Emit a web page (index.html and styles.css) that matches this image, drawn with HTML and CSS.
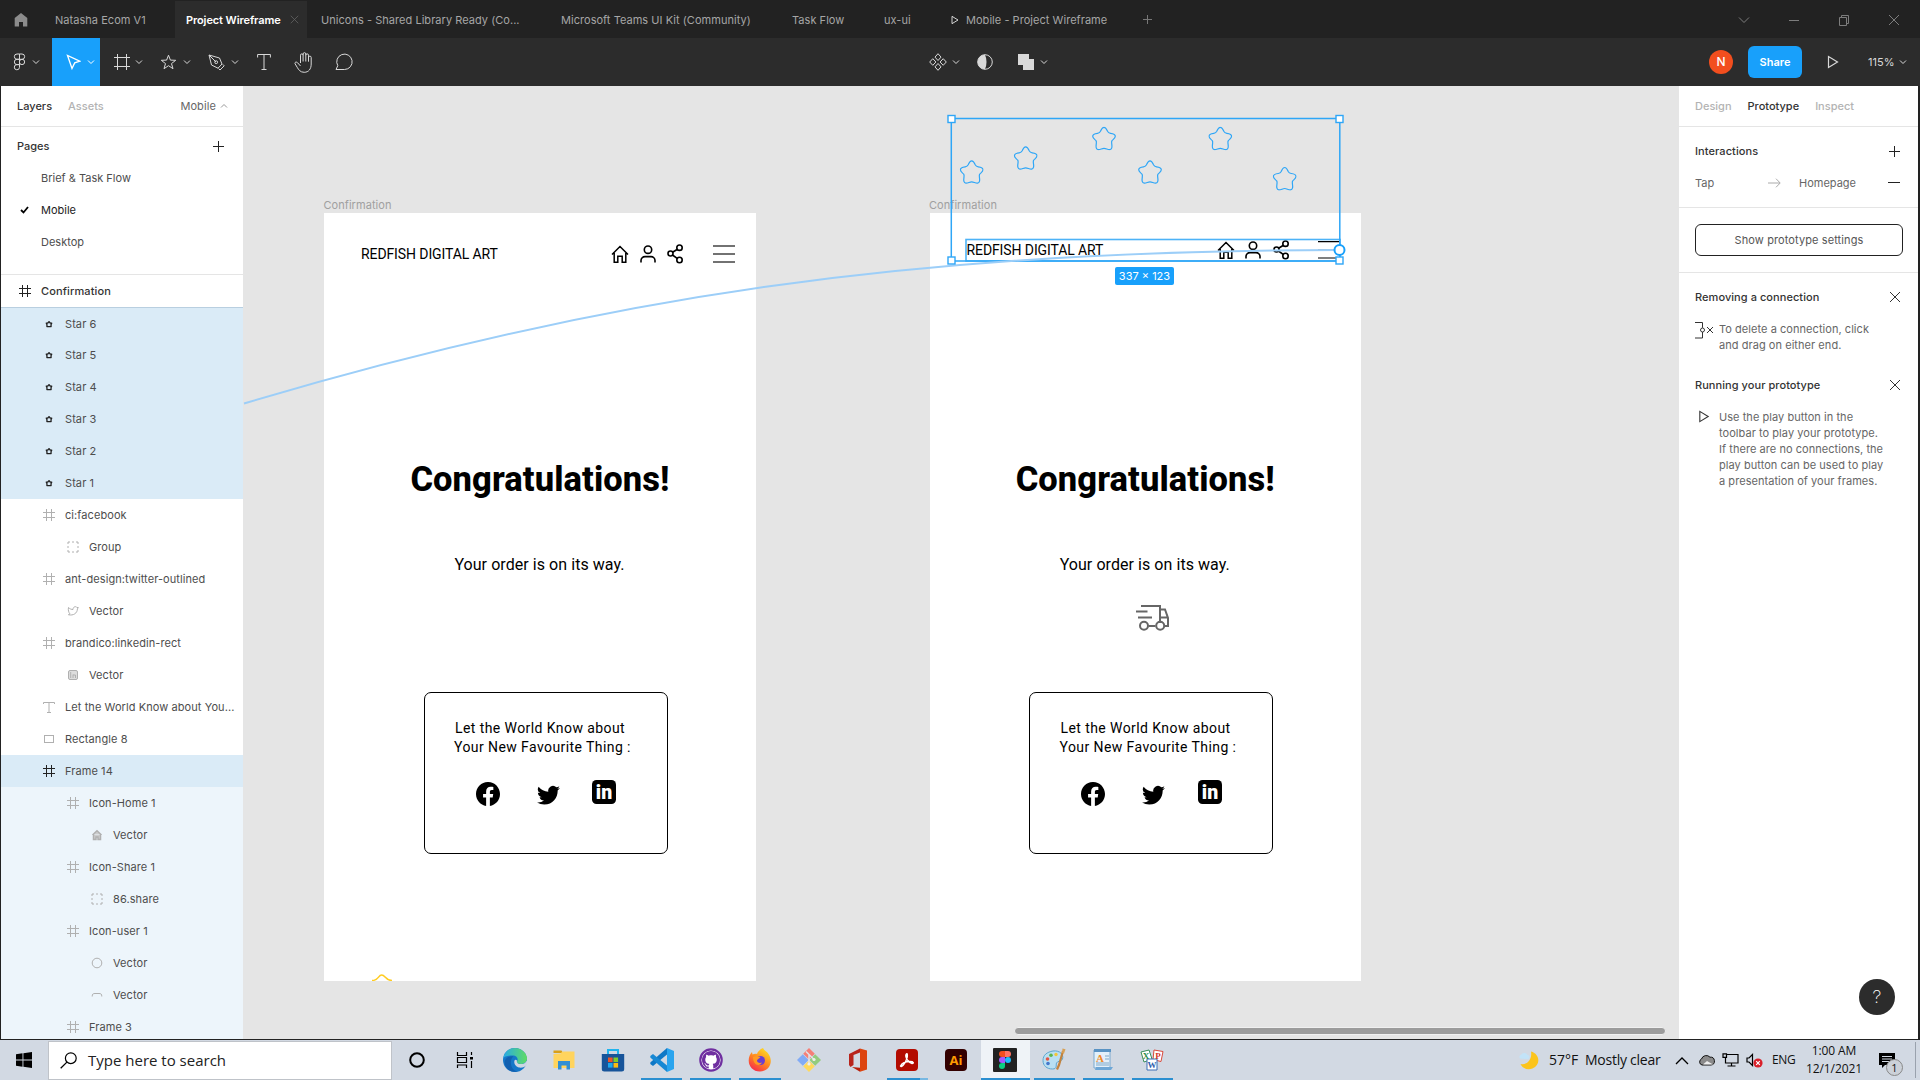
FILE: index.html
```html
<!DOCTYPE html>
<html lang="en">
<head>
<meta charset="utf-8">
<title>Project Wireframe</title>
<link rel="stylesheet" href="styles.css">
</head>
<body>
<svg class="defs" width="0" height="0">
  <symbol id="chev" viewBox="0 0 8 8"><path d="M1 2.500l3 3 3-3" fill="none" stroke="currentColor"/></symbol>
  <symbol id="frame" viewBox="0 0 12 12"><path d="M3.500 0v12M8.500 0v12M0 3.500h12M0 8.500h12" fill="none" stroke="currentColor"/></symbol>
  <symbol id="group" viewBox="0 0 12 12"><path d="M1 3V1h2M5 1h2M9 1h2v2M11 5v2M11 9v2H9M7 11H5M3 11H1V9M1 7V5" fill="none" stroke="currentColor"/></symbol>
  <symbol id="star" viewBox="0 0 24 24"><path d="M12 .8C14 .8 14.800 3.200 15.500 4.800C16.200 6.200 17 6.600 18.500 6.800C21 7.100 23.300 7.600 23.300 9.800C23.300 11.800 21 13 20 14.200C19.300 15.200 19.600 16.200 19.800 17.800C20.200 20.500 20 23 17.800 23.200C15.800 23.400 14 21.800 12 21.800C10 21.800 8.200 23.400 6.200 23.200C4 23 3.800 20.500 4.200 17.800C4.400 16.200 4.700 15.200 4 14.200C3 13 .7 11.800 .7 9.800C.7 7.600 3 7.100 5.500 6.800C7 6.600 7.800 6.200 8.500 4.800C9.200 3.200 10 .8 12 .8Z" fill="none" stroke="currentColor" stroke-width="1.200"/></symbol>
  <symbol id="ministar" viewBox="0 0 12 12"><path d="M6 3.600L7.200 5 8.700 5.200 8 6.700l.1 1.900H3.900L4 6.700 3.300 5.200 4.800 5z" fill="none" stroke="currentColor" stroke-width="1.300" stroke-linejoin="round"/></symbol>
  <symbol id="plus" viewBox="0 0 12 12"><path d="M6.500 .5v12M.5 6.500h12" fill="none" stroke="currentColor"/></symbol>
  <symbol id="cross" viewBox="0 0 12 12"><path d="M1 1l10 10M11 1L1 11" fill="none" stroke="currentColor"/></symbol>
  <symbol id="play" viewBox="0 0 12 14"><path d="M1.500 1.500v11L10.500 7z" fill="none" stroke="currentColor" stroke-width="1.200"/></symbol>
  <symbol id="home" viewBox="0 0 18 18"><path d="M1 9.500L9 1.500l8 8M3.200 8v9.300h3.600v-6h4.400v6h3.600V8" fill="none" stroke="currentColor" stroke-width="1.500"/></symbol>
  <symbol id="user" viewBox="0 0 16 18"><circle cx="8" cy="4.700" r="3.700" fill="none" stroke="currentColor" stroke-width="1.600"/><path d="M1 17.600v-2a4 4 0 0 1 4-4h6a4 4 0 0 1 4 4v2" fill="none" stroke="currentColor" stroke-width="1.600"/></symbol>
  <symbol id="share" viewBox="0 0 17 20"><g fill="none" stroke="currentColor" stroke-width="1.600"><circle cx="3.500" cy="9.500" r="2.500"/><circle cx="12.500" cy="3.700" r="2.700"/><circle cx="12.500" cy="16" r="2.700"/><path d="M5.600 8.200l4.800-3M5.500 11l5 3.600"/></g></symbol>
  <symbol id="fb" viewBox="0 0 16 16"><path d="M16 8.049c0-4.446-3.582-8.050-8-8.050C3.580 0-.002 3.603-.002 8.050c0 4.017 2.926 7.347 6.750 7.951v-5.625h-2.030V8.050H6.750V6.275c0-2.017 1.195-3.131 3.022-3.131.876 0 1.791.157 1.791.157v1.980h-1.009c-.993 0-1.303.621-1.303 1.258v1.510h2.218l-.354 2.326H9.250V16c3.824-.604 6.750-3.934 6.750-7.951z"/></symbol>
  <symbol id="tw" viewBox="0 0 16 16"><path d="M5.026 15c6.038 0 9.341-5.003 9.341-9.334 0-.14 0-.282-.006-.422A6.685 6.685 0 0 0 16 3.542a6.658 6.658 0 0 1-1.889.518 3.301 3.301 0 0 0 1.447-1.817 6.533 6.533 0 0 1-2.087.793A3.286 3.286 0 0 0 7.875 6.030a9.325 9.325 0 0 1-6.767-3.429 3.289 3.289 0 0 0 1.018 4.382A3.323 3.323 0 0 1 .64 6.575v.045a3.288 3.288 0 0 0 2.632 3.218 3.203 3.203 0 0 1-.865.115 3.230 3.230 0 0 1-.614-.057 3.283 3.283 0 0 0 3.067 2.277A6.588 6.588 0 0 1 .78 13.580a6.320 6.320 0 0 1-.78-.045A9.344 9.344 0 0 0 5.026 15z"/></symbol>
</svg>

<header class="tabs">
  <span class="tab-home"><svg width="14" height="16" viewBox="0 0 14 16"><path d="M7 1L.7 6v8.500H5V10h4v4.500h4.300V6z" fill="#8c8c8c"/></svg></span>
  <span class="tab">Natasha Ecom V1</span>
  <span class="tab active">Project Wireframe<svg class="tab-x" width="9" height="9"><use href="#cross"/></svg></span>
  <span class="tab">Unicons - Shared Library Ready (Co...</span>
  <span class="tab">Microsoft Teams UI Kit (Community)</span>
  <span class="tab">Task Flow</span>
  <span class="tab">ux-ui</span>
  <span class="tab"><svg class="tab-play" width="8" height="10"><use href="#play"/></svg>Mobile - Project Wireframe</span>
  <span class="tab-add"><svg width="10" height="10" viewBox="0 0 10 10"><path d="M4.500 0v9M0 4.500h9" stroke="#777"/></svg></span>
  <nav class="win">
    <svg width="12" height="12" viewBox="0 0 12 12"><path d="M1 3.500l5 5 5-5"/></svg>
    <svg width="12" height="12" viewBox="0 0 12 12"><path d="M1 6.500h10"/></svg>
    <svg width="12" height="12" viewBox="0 0 12 12"><path d="M1.500 3.500h7v8h-7zM3.500 3.500v-2h7v8h-2"/></svg>
    <svg width="12" height="12" viewBox="0 0 12 12"><path d="M1 1l10 10M11 1L1 11"/></svg>
  </nav>
</header>

<section class="toolbar">
  <div class="tool t-menu"><svg width="13" height="18" viewBox="0 0 13 18"><path d="M6.500 1H4a2.600 2.600 0 0 0 0 5.300h2.500zM6.500 1H9a2.600 2.600 0 0 1 0 5.300H6.500zM6.500 6.300H4a2.600 2.600 0 0 0 0 5.300h2.500zM9 6.300a2.600 2.600 0 1 1 0 5.300 2.600 2.600 0 0 1 0-5.300zM6.500 11.600H4a2.600 2.600 0 1 0 2.500 2.700z"/></svg><svg class="chev"><use href="#chev"/></svg></div>
  <div class="tool t-move"><svg width="15" height="16" viewBox="0 0 15 16"><path d="M1.500 1.500l4.500 13 2.700-5.600 5-1.700z" stroke-width="1.300"/></svg><svg class="chev"><use href="#chev"/></svg></div>
  <div class="tool t-frame"><svg width="16" height="16" viewBox="0 0 16 16"><path d="M3.500 0v16M12.500 0v16M0 3.500h16M0 12.500h16"/></svg><svg class="chev"><use href="#chev"/></svg></div>
  <div class="tool t-star"><svg width="17" height="16" viewBox="0 0 17 16"><path d="M8.500 1.200l1.900 4.900 5.300.2-4.200 3.300 1.500 5.100-4.500-3-4.500 3 1.500-5.100L1.300 6.300l5.300-.2z"/></svg><svg class="chev"><use href="#chev"/></svg></div>
  <div class="tool t-pen"><svg width="17" height="17" viewBox="0 0 17 17"><path d="M1 1l2.500 10 6.500 3.200L14 10 11.500 4zM1 1l7 7M10.500 14.500l1.500 1.500 4.200-4.200-1.500-1.500"/><circle cx="8.200" cy="8.200" r="1.400"/></svg><svg class="chev"><use href="#chev"/></svg></div>
  <div class="tool t-text"><svg width="14" height="16" viewBox="0 0 14 16"><path d="M.6 3.500v-3h12.800v3M7 .5v15M4.500 15.500h5"/></svg></div>
  <div class="tool t-hand"><svg width="19" height="21" viewBox="0 0 19 21"><path d="M6.500 11V3.200a1.300 1.300 0 0 1 2.600 0M9.100 9.500V2a1.300 1.300 0 0 1 2.700 0v7.500M11.800 3.200a1.300 1.300 0 0 1 2.700 0v6.500M14.500 5.500a1.300 1.300 0 0 1 2.700 0V12c0 5-2.500 8.300-7 8.300-4 0-5.500-2.500-7-5L1 11.700c-.5-1.500 1.400-2.200 2.500-1L6.500 14"/></svg></div>
  <div class="tool t-note"><svg width="18" height="18" viewBox="0 0 18 18"><path d="M1 16.500h8.500A7.700 7.700 0 1 0 2.800 12.700z"/></svg></div>
  <div class="mid">
    <svg width="18" height="18" viewBox="0 0 18 18"><path d="M9 .7l3 3.400-3 3.400-3-3.400zM9 10.500l3 3.400-3 3.400-3-3.400zM3.800 5.700L6.900 9l-3.100 3.300L.7 9zM14.200 5.700L17.300 9l-3.100 3.300L11.100 9z"/></svg><svg class="chev c1"><use href="#chev"/></svg>
    <svg class="mask" width="16" height="16" viewBox="0 0 16 16"><circle cx="8" cy="8" r="7.300"/><path d="M8 .7a7.300 7.300 0 0 0 0 14.600c2-4.500 2-10 0-14.600z" fill="#d9d9d9" stroke="none"/></svg>
    <svg class="bool" width="16" height="16" viewBox="0 0 16 16"><path d="M0 0h11v5h5v11H5v-5H0z" fill="#d9d9d9" stroke="none"/></svg><svg class="chev c2"><use href="#chev"/></svg>
  </div>
  <div class="right-tools"><span class="avatar">N</span><button class="share-btn">Share</button><svg class="present" width="12" height="14"><use href="#play"/></svg><span class="zoom">115%</span><svg class="chev"><use href="#chev"/></svg></div>
</section>

<main class="work">
  <aside class="left">
    <div class="panel-tabs"><b>Layers</b><b class="dim">Assets</b><span class="page-pick">Mobile<svg class="chev up"><use href="#chev"/></svg></span></div>
    <div class="pages">
      <div class="pages-head">Pages<svg width="13" height="13" viewBox="0 0 13 13"><path d="M6.500 1v11M1 6.500h11" stroke="#222"/></svg></div>
      <div class="page">Brief &amp; Task Flow</div>
      <div class="page current"><svg width="9" height="8" viewBox="0 0 9 8"><path d="M1 4l2.500 2.500L8 1" fill="none" stroke="#000" stroke-width="1.800"/></svg>Mobile</div>
      <div class="page">Desktop</div>
    </div>
    <div class="layers">
      <div class="row top"><svg class="ic"><use href="#frame"/></svg>Confirmation</div>
      <div class="row l1 sel"><svg class="ic"><use href="#ministar"/></svg>Star 6</div>
      <div class="row l1 sel"><svg class="ic"><use href="#ministar"/></svg>Star 5</div>
      <div class="row l1 sel"><svg class="ic"><use href="#ministar"/></svg>Star 4</div>
      <div class="row l1 sel"><svg class="ic"><use href="#ministar"/></svg>Star 3</div>
      <div class="row l1 sel"><svg class="ic"><use href="#ministar"/></svg>Star 2</div>
      <div class="row l1 sel"><svg class="ic"><use href="#ministar"/></svg>Star 1</div>
      <div class="row l1"><svg class="ic"><use href="#frame"/></svg>ci:facebook</div>
      <div class="row l2"><svg class="ic"><use href="#group"/></svg>Group</div>
      <div class="row l1"><svg class="ic"><use href="#frame"/></svg>ant-design:twitter-outlined</div>
      <div class="row l2"><svg class="ic" viewBox="0 0 12 12"><path d="M1.500 2.500c1.500 1.600 3 2 4.500 2C6 1.500 9 1 10 2.500h1.300L10.400 4c0 4-4 7-9 5.700L3 8.800C1.600 7.500 1 5 1.500 2.500z" fill="none" stroke="currentColor"/></svg>Vector</div>
      <div class="row l1"><svg class="ic"><use href="#frame"/></svg>brandico:linkedin-rect</div>
      <div class="row l2"><svg class="ic" viewBox="0 0 12 12"><rect x="1.500" y="1.500" width="9" height="9" rx="1.500" fill="#ddd" stroke="currentColor"/><path d="M3.700 3v6M6 9V5.500M6 6h2.500v3" fill="none" stroke="currentColor"/></svg>Vector</div>
      <div class="row l1"><svg class="ic" viewBox="0 0 12 12"><path d="M.5 3V1.500h11V3M6 1.500v10M4 11.500h4" fill="none" stroke="currentColor"/></svg>Let the World Know about You...</div>
      <div class="row l1"><svg class="ic" viewBox="0 0 12 12"><rect x="1.500" y="2.500" width="9" height="7" fill="none" stroke="currentColor"/></svg>Rectangle 8</div>
      <div class="row l1 sel"><svg class="ic"><use href="#frame"/></svg>Frame 14</div>
      <div class="row l2 child"><svg class="ic"><use href="#frame"/></svg>Icon-Home 1</div>
      <div class="row l3 child"><svg class="ic" viewBox="0 0 12 12"><path d="M1.500 6L6 1.800 10.500 6M2.500 5.500v5h2.500V8h2v2.500h2.500v-5" fill="#ccc" stroke="currentColor" stroke-width="1.500"/></svg>Vector</div>
      <div class="row l2 child"><svg class="ic"><use href="#frame"/></svg>Icon-Share 1</div>
      <div class="row l3 child"><svg class="ic"><use href="#group"/></svg>86.share</div>
      <div class="row l2 child"><svg class="ic"><use href="#frame"/></svg>Icon-user 1</div>
      <div class="row l3 child"><svg class="ic" viewBox="0 0 12 12"><circle cx="6" cy="6" r="4.800" fill="none" stroke="currentColor"/></svg>Vector</div>
      <div class="row l3 child"><svg class="ic" viewBox="0 0 12 12"><path d="M1.200 7.500C1.200 5 2 4.500 4 4.500h4c2 0 2.800.5 2.800 3" fill="none" stroke="currentColor"/></svg>Vector</div>
      <div class="row l2 child"><svg class="ic"><use href="#frame"/></svg>Frame 3</div>
    </div>
  </aside>

  <section class="canvas">
    <div class="artboard a1">
      <span class="label">Confirmation</span>
      <div class="head"><span class="brand">REDFISH DIGITAL ART</span><svg class="h-home" width="18" height="18"><use href="#home"/></svg><svg class="h-user" width="16" height="18"><use href="#user"/></svg><svg class="h-share" width="17" height="20"><use href="#share"/></svg><svg class="h-menu" width="22" height="20" viewBox="0 0 22 20"><path d="M0 2h22M0 10h22M0 18h22" stroke="#444" stroke-width="1.300"/></svg></div>
      <h1>Congratulations!</h1>
      <p class="msg">Your order is on its way.</p>
      <div class="truck"></div>
      <div class="card"><p class="first">Let the World Know about</p><p>Your New Favourite Thing :</p><div class="social"><svg class="s-fb"><use href="#fb"/></svg><svg class="s-tw"><use href="#tw"/></svg><svg class="s-li" viewBox="0 0 24 24"><rect width="24" height="24" rx="4.500"/><text class="li-text" x="12" y="19" text-anchor="middle">in</text></svg></div></div>
      <svg class="peek" width="20" height="7" viewBox="0 0 20 7"><path d="M0 6.500C7 6.500 6 1 9.700 1S13 6.500 20 6.500" fill="none" stroke="#fc2" stroke-width="1.500"/></svg>
    </div>
    <div class="artboard a2">
      <span class="label">Confirmation</span>
      <div class="head"><span class="brand">REDFISH DIGITAL ART</span><svg class="h-home" width="18" height="18"><use href="#home"/></svg><svg class="h-user" width="16" height="18"><use href="#user"/></svg><svg class="h-share" width="17" height="20"><use href="#share"/></svg><svg class="h-menu" width="22" height="20" viewBox="0 0 22 20"><path d="M0 1.700h22M0 18h22" stroke="#000" stroke-width="1.200"/><path d="M0 9.500h22" stroke="#999"/></svg></div>
      <h1>Congratulations!</h1>
      <p class="msg">Your order is on its way.</p>
      <div class="truck"><svg width="33" height="27" viewBox="0 0 33 27"><g fill="none" stroke="#666" stroke-width="2"><path d="M5 2h19v17M0 7.500h11.500M2 13.500h14M12.500 22h7M24 5.500h5L32 14v8h-3.500M24 13.500h8"/><circle cx="8" cy="21.800" r="4"/><circle cx="24.200" cy="21.800" r="4"/></g></svg></div>
      <div class="card"><p class="first">Let the World Know about</p><p>Your New Favourite Thing :</p><div class="social"><svg class="s-fb"><use href="#fb"/></svg><svg class="s-tw"><use href="#tw"/></svg><svg class="s-li" viewBox="0 0 24 24"><rect width="24" height="24" rx="4.500"/><text class="li-text" x="12" y="19" text-anchor="middle">in</text></svg></div></div>
    </div>
    <svg class="overlay" width="1436" height="953" viewBox="243 86 1436 953">
      <g class="stars">
        <use href="#star" x="959.700" y="160" width="24" height="24"/><use href="#star" x="1013.700" y="146" width="24" height="24"/><use href="#star" x="1092" y="126.500" width="24" height="24"/><use href="#star" x="1138" y="160" width="24" height="24"/><use href="#star" x="1208.300" y="126.500" width="24" height="24"/><use href="#star" x="1272.700" y="166.700" width="24" height="24"/>
      </g>
      <rect x="966" y="239.500" width="374" height="21.500" fill="none" stroke="#4db3f7" stroke-width="1.600"/>
      <rect x="951.300" y="118.500" width="388.500" height="142.500" fill="none" stroke="#2ea6f7" stroke-width="1.500"/>
      <path d="M244 403.500C604 295.500 920 250 1340 250" fill="none" stroke="#9ccef8" stroke-width="2"/>
      <g fill="#fff" stroke="#2ea6f7" stroke-width="1.400"><rect x="948" y="115.500" width="7" height="7"/><rect x="1336" y="115.500" width="7" height="7"/><rect x="948" y="257" width="7" height="7"/><rect x="1336" y="257" width="7" height="7"/></g>
      <circle cx="1339.500" cy="250" r="5" fill="#fff" stroke="#18a0fb" stroke-width="2"/>
    </svg>
    <span class="dims">337 × 123</span>
    <i class="scroll"></i>
  </section>

  <aside class="right">
    <div class="panel-tabs"><b class="dim">Design</b><b>Prototype</b><b class="dim">Inspect</b></div>
    <div class="inter">
      <div class="inter-head">Interactions<svg width="13" height="13" viewBox="0 0 13 13"><path d="M6.500 1v11M1 6.500h11" stroke="#222"/></svg></div>
      <div class="inter-row"><span class="trig">Tap</span><svg class="arrow" width="13" height="10" viewBox="0 0 13 10"><path d="M0 5h12M8 .7L12.200 5 8 9.300" fill="none" stroke="#aaa"/></svg><span>Homepage</span><svg class="minus" width="12" height="12" viewBox="0 0 12 12"><path d="M0 5.500h12" stroke="#222"/></svg></div>
    </div>
    <div class="settings"><button>Show prototype settings</button></div>
    <div class="tips">
      <h3>Removing a connection<svg width="12" height="12"><use href="#cross"/></svg></h3>
      <div class="tip"><svg width="19" height="18" viewBox="0 0 19 18"><path d="M0 1.500h7.500v5.300M7.500 11v6H0M12 6l6 6M18 6l-6 6" fill="none" stroke="#333"/><circle cx="7.500" cy="9" r="2" fill="none" stroke="#333"/></svg><p>To delete a connection, click<br>and drag on either end.</p></div>
      <h3 class="second">Running your prototype<svg width="12" height="12"><use href="#cross"/></svg></h3>
      <div class="tip"><svg class="tip-play" width="12" height="13"><use href="#play"/></svg><p>Use the play button in the<br>toolbar to play your prototype.<br>If there are no connections, the<br>play button can be used to play<br>a presentation of your frames.</p></div>
    </div>
    <span class="help">?</span>
  </aside>
</main>

<footer class="taskbar">
  <span class="start"><svg width="16" height="16" viewBox="0 0 16 16"><path d="M0 2.200L6.500 1.300v6.200H0zM7.400 1.200L16 0v7.500H7.400zM0 8.400h6.500v6.300L0 13.800zM7.400 8.400H16V16l-8.600-1.200z"/></svg></span>
  <div class="search"><svg width="17" height="17" viewBox="0 0 17 17"><circle cx="10.800" cy="6.200" r="5.400" fill="none" stroke="#000" stroke-width="1.200"/><path d="M6.900 10.100L.7 16.300" stroke="#000" stroke-width="1.300"/></svg>Type here to search</div>
  <div class="apps">
    <span class="app"><svg viewBox="0 0 24 24"><circle cx="12" cy="12" r="6.800" fill="none" stroke="#000" stroke-width="2"/></svg></span>
    <span class="app"><svg viewBox="0 0 24 24"><path d="M3.500 4v3.500h9V4M3.500 20v-3h9v3M3.500 9.500h9v5h-9zM17.500 4v3M17.500 13v7" fill="none" stroke="#000" stroke-width="1.200"/><rect x="16" y="9" width="3" height="2.500"/></svg></span>
    <span class="app"><svg viewBox="0 0 24 24"><defs><linearGradient id="e1" x1="0" x2="1"><stop stop-color="#27a9e8"/><stop offset="1" stop-color="#5fdc63"/></linearGradient></defs><circle cx="12" cy="12" r="12" fill="#1577c9"/><path d="M0 11C1 4 6 0 12 0s12 5 12 10.500c0 4-3.500 5.500-6.500 5.500-2.500 0-4-1-3.500-2.500 1.500-2 .5-6-4.500-6C5 7.500 1 8.500 0 11z" fill="url(#e1)"/><path d="M24 17c-2 2-5 3-8 2.500-3-.5-5.500-3.500-4.500-7 .5-1 1.500-1 2.500 0-.5 2 .5 3.500 3.500 3.500 2.500 0 5-.5 6.400-3.500L24.500 14z" fill="#cdd6e2"/><path d="M8 13c-1 6 3 10.500 7 10.500C9 25 2 22 1.500 14 2.500 8.500 8 8 10.500 8.500 9 9.500 8.200 11 8 13z" fill="#1160b0"/></svg></span>
    <span class="app"><svg viewBox="0 0 24 24"><path d="M1.500 2.500h8l1.500 2.500H1.500z" fill="#d9a018"/><path d="M1.500 6l7-.5 2-2H22.500V20h-21z" fill="#ffd45e"/><path d="M6 21.500V13h12v8.500h-3.500V17.500h-5v4z" fill="#2f8fd4"/></svg></span>
    <span class="app"><svg viewBox="0 0 24 24"><path d="M7 7V2h10v5" fill="none" stroke="#20b4ee" stroke-width="2"/><path d="M.8 6h22.400v15a2.500 2.500 0 0 1-2.500 2.500H3.300A2.500 2.500 0 0 1 .8 21z" fill="#17549a"/><path d="M7 9.500h4.600v4.600H7z" fill="#f05327"/><path d="M12.500 9.500h4.600v4.600h-4.600z" fill="#80cc28"/><path d="M7 15h4.600v4.600H7z" fill="#1ba8ef"/><path d="M12.500 15h4.600v4.600h-4.600z" fill="#fcbb10"/></svg></span>
    <span class="app on"><svg viewBox="0 0 24 24"><path d="M17 0l7 3v18l-7 3z" fill="#2aa4ee"/><path d="M17 0v6.500L3 18 .3 16v-1.500z" fill="#0f78c6"/><path d="M17 24v-6.500L3 6 .3 8v1.500z" fill="#1788d4"/></svg></span>
    <span class="app on"><svg viewBox="0 0 24 24"><circle cx="12" cy="12" r="11.300" fill="#fff"/><circle cx="12" cy="12" r="10.700" fill="none" stroke="#6f2fa0" stroke-width="2.200"/><g transform="translate(3 3) scale(1.125)"><path d="M8 0C3.580 0 0 3.580 0 8c0 3.540 2.290 6.530 5.470 7.590.4.070.55-.17.55-.38 0-.19-.01-.82-.01-1.490-2.010.37-2.530-.49-2.690-.94-.09-.23-.48-.94-.82-1.130-.28-.15-.68-.52-.01-.53.63-.01 1.080.58 1.230.82.72 1.210 1.870.87 2.330.66.07-.52.28-.87.51-1.070-1.780-.2-3.640-.89-3.640-3.950 0-.87.31-1.590.82-2.150-.08-.2-.36-1.020.08-2.120 0 0 .67-.21 2.200.82.64-.18 1.320-.27 2-.27.68 0 1.360.09 2 .27 1.530-1.040 2.200-.82 2.200-.82.44 1.100.16 1.920.08 2.120.51.56.82 1.270.82 2.150 0 3.070-1.870 3.750-3.650 3.950.29.25.54.73.54 1.480 0 1.070-.01 1.930-.01 2.200 0 .21.15.46.55.38A8.012 8.012 0 0 0 16 8c0-4.420-3.580-8-8-8z" fill="#6f2fa0"/></g></svg></span>
    <span class="app on"><svg viewBox="0 0 24 24"><defs><linearGradient id="ff" x1=".8" y1="0" x2=".2" y2="1"><stop stop-color="#ffe226"/><stop offset=".5" stop-color="#ff8a1f"/><stop offset="1" stop-color="#f5244f"/></linearGradient></defs><path d="M15 0c1 2.500 4 3.500 5.500 6C26 14 21 23.500 12 23.500 5 23.500.7 18.500.7 12.500.7 9 2 6 4 4l.5 2.500C6 5.500 8 5.500 9 6c.5-2 3-5 6-6z" fill="url(#ff)"/><circle cx="12.500" cy="12.500" r="4.500" fill="#6a3fd0"/><path d="M5 9c3-1.500 5 0 7.500 0-1 2-3 1.500-3.500 3.500 0 2 2.500 3 5 2-2 4.500-9 3-9-5.500z" fill="#ff9a22"/></svg></span>
    <span class="app"><svg viewBox="0 0 24 24"><path d="M12 0l5.800 5.800L12 11.600 6.200 5.800z" fill="#f57f77"/><path d="M18.200 6.200L24 12l-5.800 5.800L12.400 12z" fill="#93cc7d"/><path d="M5.800 6.200L11.600 12l-5.800 5.800L0 12z" fill="#82abf5"/><path d="M12 12.400l5.800 5.800L12 24l-5.800-5.800z" fill="#ffd95c"/><path d="M9 3.500l8 8M12 7v9" stroke="#dfe4ea" stroke-width="1.500"/><circle cx="12" cy="16" r="1.600" fill="#eee"/><circle cx="17" cy="11.500" r="1.600" fill="#eee"/></svg></span>
    <span class="app"><svg viewBox="0 0 24 24"><path d="M3 6l11-5.500v4L7.500 7v10l-3 2L3 17z" fill="#b8241c"/><path d="M14 .5l7 2v19l-7 2.200z" fill="#dd4510"/><path d="M6 19l8 .7v4z" fill="#b8200c"/></svg></span>
    <span class="app on half"><svg viewBox="0 0 24 24"><rect x="1" y="1" width="22" height="22" rx="4" fill="#b30b00"/><path d="M5.500 18c1.500-3 6-4.500 9.500-4.500 4 0 4 2.200 2 2C13.500 15 10 9 11 6.500c1.500-2.500 2 1.500.5 5C10 15.500 6.500 20 5.500 18z" fill="none" stroke="#fff" stroke-width="1.400"/></svg></span>
    <span class="app"><svg viewBox="0 0 24 24"><rect x="1" y="1" width="22" height="22" rx="4" fill="#330000"/><text class="ai-text" x="12" y="16.700" text-anchor="middle">Ai</text></svg></span>
    <span class="app on focus"><svg viewBox="0 0 24 24"><rect width="24" height="24" rx="1" fill="#222"/><path d="M9 3h3v6H9a3 3 0 0 1 0-6z" fill="#f24e1e"/><path d="M12 3h3a3 3 0 0 1 0 6h-3z" fill="#ff7262"/><path d="M9 9h3v6H9a3 3 0 0 1 0-6z" fill="#a259ff"/><circle cx="15" cy="12" r="3" fill="#1abcfe"/><path d="M9 15h3v3a3 3 0 1 1-3-3z" fill="#0acf83"/></svg></span>
    <span class="app on"><svg viewBox="0 0 24 24"><path d="M11 3c7-1 11 4 9.500 8-1 3-5 1.500-6 4-.8 2.500 1 6-4 6C5 21 1 18 1 12.500 1 7 5 4 11 3z" fill="#b9dff2" stroke="#5da6cf"/><circle cx="5.500" cy="11" r="1.800" fill="#e25545"/><circle cx="9" cy="7.200" r="1.800" fill="#5db54d"/><circle cx="14" cy="6.500" r="1.700" fill="#f2c53a"/><circle cx="6" cy="15.500" r="1.800" fill="#4477cc"/><path d="M21 3l-4 14-2 4.500" stroke="#c3833e" stroke-width="2.200" fill="none"/><path d="M20 5l.5-4.500 3 .8L22 5.500z" fill="#d7a055"/></svg></span>
    <span class="app on"><svg viewBox="0 0 24 24"><path d="M3 2h16v18H3z" fill="#e3f0fa" stroke="#7aa9cf"/><path d="M3 1h17v3H3z" fill="#5993c4"/><path d="M5 19h17l-2 3H4z" fill="#6ea7d6"/><path d="M14 8h4M14 11h4M5 15h13M5 17h13" stroke="#7fa8c8"/><text class="doc-a" x="9" y="13.500" text-anchor="middle">A</text></svg></span>
    <span class="app on"><svg viewBox="0 0 24 24"><path d="M1 4l8-2 3 9-8 3z" fill="#fff" stroke="#3a8f5a"/><path d="M14 2l9 1.500-2 10-8-2z" fill="#fff" stroke="#d9493b"/><path d="M7 11h10v11H7z" fill="#fff" stroke="#3b6fb6"/><g class="cards-text" text-anchor="middle"><text x="6" y="11" fill="#2a8a4a">X</text><text x="18" y="10.500" fill="#d33a2c">P</text><text x="12" y="20" fill="#2f62ae">W</text></g></svg></span>
  </div>
  <div class="tray">
    <svg class="moon" width="20" height="19" viewBox="0 0 20 19"><path d="M12 .5c9 2.500 10 13 1.500 17C8 19.500 3 17 1.500 13c6 1.500 12-4 10.500-12.500z" fill="#fcc41c"/><path d="M1 7.500a2.500 2.500 0 0 1 1.500-4 3.500 3.500 0 0 1 6 .5 2 2 0 0 1 0 4z" fill="#c2e3f8"/></svg>
    <span class="temp">57°F</span><span class="sky">Mostly clear</span>
    <svg class="t-up" width="14" height="9" viewBox="0 0 14 9"><path d="M1 8l6-6 6 6" fill="none" stroke="#000" stroke-width="1.300"/></svg>
    <svg class="t-cloud" width="17" height="12" viewBox="0 0 17 12"><path d="M4 11a3.200 3.200 0 0 1-.5-6A5 5 0 0 1 12 3.200 3.900 3.900 0 0 1 13 11z" fill="#8b8b8b" stroke="#111"/><path d="M5 10.500l4-3.500 6 3.500z" fill="#eee"/></svg>
    <svg class="t-net" width="17" height="14" viewBox="0 0 17 14"><path d="M5 1.500h11v8.500H3.500V5M9.500 10v3M5.500 13h8M1 .8h3.500v3.500H1z" fill="none" stroke="#000" stroke-width="1.200"/></svg>
    <svg class="t-vol" width="17" height="15" viewBox="0 0 17 15"><path d="M1 5h2l3.500-3.500v11L3 9H1z" fill="none" stroke="#000" stroke-width="1.200"/><circle cx="12" cy="10" r="4.600" fill="#d9202a"/><path d="M10.200 8.200l3.600 3.600M13.800 8.200l-3.600 3.600" stroke="#fff" stroke-width="1.200"/></svg>
    <span class="lang">ENG</span>
    <span class="clock">1:00 AM<br>12/1/2021</span>
    <span class="notif"><svg width="16" height="15" viewBox="0 0 16 15"><path d="M0 0h16v12H6l-3 3v-3H0z"/><path d="M3 3.500h10M3 6h10M3 8.500h7" stroke="#d2d9e3"/></svg><i>1</i></span>
  </div>
</footer>
</body>
</html>
```

FILE: styles.css
```css
* { box-sizing: border-box; }
body { margin: 0; width: 1920px; height: 1080px; overflow: hidden; display: flex; flex-direction: column; font: 11px/16px Inter, sans-serif; color: #333; background: #222; }
svg { flex: none; display: block; }
p, h1, h3 { margin: 0; }
.defs { position: absolute; }
.chev { width: 8px; height: 8px; }

/* file tabs */
.tabs { height: 38px; display: grid; grid-template-columns: 41px 134px 132px 240px 231px 92px 67px 192px 38px 1fr; background: #222; color: #a6a6a6; padding-top: 1px; letter-spacing: .04px; }
.tabs > * { display: flex; align-items: center; white-space: nowrap; }
.tab { padding-left: 14px; }
.tab.active { background: #2c2c2c; color: #fff; font-weight: 600; padding-left: 11px; letter-spacing: -.1px; }
.tab-home { padding-left: 14px; }
.tab-x { margin-left: 9px; color: #666; }
.tab-play { margin-right: 7px; color: #fff; }
.tab-add { padding-left: 14px; color: #777; }
.win { justify-content: flex-end; gap: 38px; padding-right: 20px; }
.win path { fill: none; stroke: #7d7d7d; }

/* toolbar */
.toolbar { height: 48px; background: #2c2c2c; display: flex; align-items: center; color: #d9d9d9; }
.toolbar path, .toolbar circle { stroke: #d9d9d9; fill: none; }
.toolbar path[fill="#d9d9d9"] { fill: #d9d9d9; stroke: none; }
.tool { height: 48px; display: flex; align-items: center; width: 48px; }
.tool .chev { margin-left: 7px; }
.t-menu { width: 52px; padding-left: 13px; }
.t-menu .chev { margin-left: 6px; }
.t-move { background: #18a0fb; padding-left: 14px; color: #fff; }
.t-move path { stroke: #fff; }
.t-move .chev { margin-left: 6px; }
.t-frame { padding-left: 14px; }
.t-frame .chev { margin-left: 5px; }
.t-star { padding-left: 12px; }
.t-star .chev { margin-left: 6px; }
.t-pen { padding-left: 12px; }
.t-pen .chev { margin-left: 6px; }
.t-text { width: 49px; padding-left: 13px; }
.t-hand { width: 40px; padding-left: 1px; }
.t-note { width: 40px; padding-left: 2px; }
.mid { margin-left: 556px; display: flex; align-items: center; width: 160px; }
.mid .c1 { margin-left: 5px; }
.mask { margin-left: 17px; }
.bool { margin-left: 25px; }
.mid .c2 { margin-left: 6px; }
.right-tools { margin-left: auto; display: flex; align-items: center; padding-right: 13px; }
.avatar { width: 24px; height: 24px; border-radius: 50%; background: #f24e1e; color: #fff; font-weight: 500; font-size: 12px; line-height: 24px; text-align: center; margin-right: 15px; }
.share-btn { width: 54px; height: 32px; border: 0; border-radius: 6px; background: #18a0fb; color: #fff; font: 600 11px Inter, sans-serif; padding: 0; margin-right: 25px; }
.present { margin-right: 29px; }
.zoom { width: 26px; margin-right: 5px; white-space: nowrap; }

/* workspace */
.work { height: 953px; display: grid; grid-template-columns: 242px 1436px 240px; padding-left: 1px; }
.left, .right { background: #fff; overflow: hidden; }
.panel-tabs { height: 41px; border-bottom: 1px solid #e5e5e5; display: flex; align-items: center; padding-left: 16px; gap: 16px; }
.panel-tabs b { font-weight: 550; }
.panel-tabs .dim { color: #b3b3b3; font-weight: 500; }
.page-pick { margin-left: auto; display: flex; align-items: center; gap: 4px; color: #666; padding-right: 15px; letter-spacing: .1px; }
.up { transform: rotate(180deg); color: #999; }
.pages { height: 148px; padding-top: 3px; border-bottom: 1px solid #e5e5e5; }
.pages-head { height: 32px; display: flex; align-items: center; justify-content: space-between; padding: 0 18px 0 16px; font-weight: 550; }
.page { height: 32px; line-height: 32px; padding-left: 40px; position: relative; color: #4d4d4d; }
.page.current { color: #222; }
.page svg { position: absolute; left: 19px; top: 12px; }
.row { height: 32px; display: flex; align-items: center; gap: 10px; color: #4d4d4d; white-space: nowrap; letter-spacing: .08px; }
.ic { width: 12px; height: 12px; color: #b0b0b0; }
.row.top { padding-left: 18px; font-weight: 550; color: #333; letter-spacing: .12px; border-bottom: 1px solid #b9cfe0; height: 33px; padding-bottom: 0; }
.row.top + .row { height: 31px; }
.row.top .ic, .sel .ic { color: #222; }
.l1 { padding-left: 42px; }
.l2 { padding-left: 66px; }
.l3 { padding-left: 90px; }
.sel { background: #daebf7; }
.child { background: #edf5fb; }

/* canvas */
.canvas { background: #e5e5e5; position: relative; overflow: hidden; }
.artboard { position: absolute; top: 127px; width: 432px; height: 768px; background: #fff; font-family: Roboto, sans-serif; color: #000; display: flex; flex-direction: column; }
.a1 { left: 81px; }
.a2 { left: 686.500px; width: 431.500px; }
.label { position: absolute; left: -.5px; top: -16px; font: 11px/16px Inter, sans-serif; color: #a0a0a0; letter-spacing: .05px; }
.head { margin: 29.500px 0 .5px 37px; height: 23px; display: flex; align-items: center; }
.a2 .head { margin-top: 25px; margin-bottom: 5px; }
.brand { width: 250px; font-size: 14px; letter-spacing: -.1px; }
.h-user { margin-left: 10.500px; }
.h-share { margin-left: 11.500px; }
.h-menu { margin-left: 28.500px; }
.artboard h1 { margin-top: 193px; font-size: 34.500px; line-height: 40px; font-weight: 800; letter-spacing: .08px; text-align: center; }
.msg { margin-top: 56px; font-size: 16px; line-height: 20px; letter-spacing: .06px; text-align: center; padding-right: 1px; }
.truck { height: 117px; padding: 28.500px 0 0 206.500px; }
.card { margin-left: 99.500px; width: 244px; height: 162px; border: 1.200px solid #000; border-radius: 7px; padding: 25.500px 0 0 29.500px; font-size: 14px; line-height: 19.500px; letter-spacing: .42px; }
.first { padding-left: 1px; }
.social { display: flex; padding: 22.500px 0 0 21.500px; }
.s-fb { width: 24px; height: 24px; margin-top: 2px; }
.s-tw { width: 23px; height: 23px; margin: 3px 0 0 37px; }
.s-li { width: 24px; height: 24px; margin-left: 32.500px; }
.li-text { font: 900 19.500px Roboto, sans-serif; letter-spacing: 0; fill: #fff; }
.peek { position: absolute; left: 48px; bottom: 0; }
.overlay { position: absolute; left: 0; top: 0; }
.stars { color: #2ea6f7; }
.dims { position: absolute; left: 872px; top: 181px; width: 59px; height: 18px; border-radius: 2px; background: #18a0fb; color: #fff; line-height: 18px; text-align: center; white-space: nowrap; }
.scroll { position: absolute; left: 771px; top: 941px; width: 652px; height: 8px; border-radius: 4px; background: #9c9c9c; border: 1px solid #f0f0f0; }

/* prototype panel */
.right { position: relative; border-right: 1px solid #222; }
.inter { height: 81px; padding: 8px 17px 0 16px; border-bottom: 1px solid #e5e5e5; }
.inter-head { height: 32px; display: flex; align-items: center; justify-content: space-between; font-weight: 550; letter-spacing: .08px; }
.inter-row { height: 32px; display: flex; align-items: center; color: #666; }
.trig { width: 73px; }
.arrow { margin-right: 18px; }
.minus { margin-left: auto; margin-right: 1px; }
.settings { height: 65px; padding: 16px 15px 0 16px; border-bottom: 1px solid #e5e5e5; }
.settings button { width: 208px; height: 32px; background: #fff; border: 1px solid #222; border-radius: 6px; color: #555; font: 11px Inter, sans-serif; letter-spacing: .1px; padding: 0; }
.tips { padding: 8px 17px 0 16px; }
.tips h3 { height: 32px; display: flex; align-items: center; justify-content: space-between; font-size: 11px; font-weight: 550; letter-spacing: .06px; }
.tips .second { margin-top: 16px; }
.tip { display: flex; padding-top: 8px; color: #666; letter-spacing: .05px; }
.tip p { margin-left: 5px; white-space: nowrap; }
.tip .tip-play { margin: 1px 4px 0 3px; color: #333; }
.help { position: absolute; left: 180px; top: 893px; width: 36px; height: 36px; border-radius: 50%; background: #2c2c2c; color: #fff; font-size: 18px; font-weight: 200; line-height: 36px; text-align: center; }

/* taskbar */
.taskbar { margin-top: 1px; height: 40px; background: #d2d9e3; display: flex; align-items: center; color: #111; font-family: "Open Sans", sans-serif; }
.start { width: 48px; padding-left: 16px; }
.search { width: 344px; height: 39px; background: #fff; border: 1px solid #bfc3c9; display: flex; align-items: center; gap: 11px; padding-left: 11px; font-size: 15px; color: #222; }
.apps { display: flex; }
.app { width: 49.070px; height: 40px; display: flex; align-items: center; justify-content: center; position: relative; }
.app svg { width: 24px; height: 24px; }
.ai-text { font: 700 13px "Open Sans", sans-serif; fill: #ff9a00; }
.doc-a { font: 700 11px "Liberation Serif", serif; fill: #f08a28; }
.cards-text { font: 700 9px "Liberation Serif", serif; }
.on::after { content: ""; position: absolute; left: 4px; right: 4px; bottom: 0; height: 2px; background: #2b8fd0; }
.half::after { background: linear-gradient(90deg, #2b8fd0 80%, #78b8e2 80%); }
.focus { background: #eff3f7; }
.focus::after { left: 0; right: 0; }
.tray { flex: 1; display: flex; align-items: center; font-size: 15px; white-space: nowrap; border-right: 1px solid #9aa2ad; margin-right: 4px; }
.moon { margin-left: 342px; }
.temp { margin-left: 10px; width: 36px; font-size: 14px; }
.sky { width: 84px; font-size: 14px; letter-spacing: -.25px; }
.t-up { margin-left: 6px; }
.t-cloud { margin-left: 9px; }
.t-net { margin-left: 7px; }
.t-vol { margin-left: 7px; }
.lang { margin-left: 9px; width: 26px; font-size: 12px; letter-spacing: -.3px; }
.clock { width: 72px; font-size: 12px; line-height: 18px; text-align: center; letter-spacing: -.1px; }
.notif { position: relative; margin-left: 9px; }
.notif i { position: absolute; left: 7px; top: 6px; width: 17px; height: 17px; border-radius: 50%; border: 1px solid #888; background: #ccd1d8; font: 11px/15px "Open Sans", sans-serif; text-align: center; }
```
